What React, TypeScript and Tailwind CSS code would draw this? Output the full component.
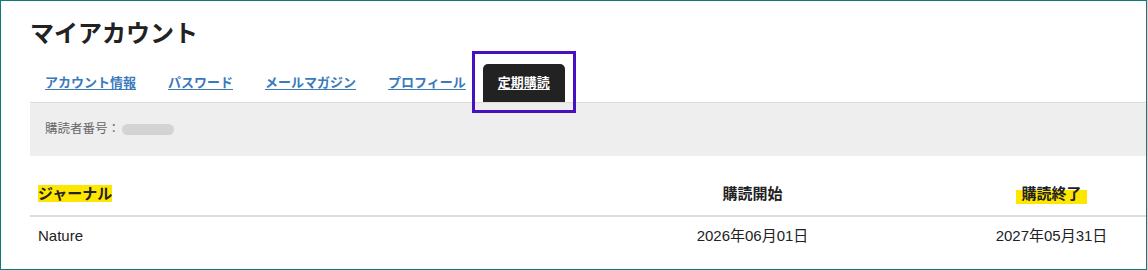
import * as React from "react";

const tabs = ["アカウント情報", "パスワード", "メールマガジン", "プロフィール"];

const App = () => {
  return (
    <div
      className="w-[1147px] h-[270px] border border-[#0d7c77] overflow-hidden bg-white text-[#222]"
      style={{ fontFamily: '"Liberation Sans", "Noto Sans CJK JP", sans-serif' }}
    >
      <div className="pl-[29px] w-[1200px]">
        <h1 className="pt-[17px] text-[24px] leading-8 font-bold">マイアカウント</h1>

        <div className="mt-[14px] flex items-end gap-[2px] h-[38px]">
          {tabs.map((t) => (
            <a
              key={t}
              href="#"
              className="px-[15px] h-full flex items-center text-[13px] font-bold text-[#3b79bd] underline underline-offset-2"
            >
              {t}
            </a>
          ))}
          <div className="relative h-full">
            <div className="h-full px-[15px] flex items-center bg-[#222] rounded-t-[5px] text-[13px] font-bold text-white underline underline-offset-2">
              定期購読
            </div>
            <div className="absolute -left-[11px] -right-[11px] -top-[13px] -bottom-[11px] border-[3px] border-[#4611c2] z-10" />
          </div>
        </div>

        <div className="h-[54px] bg-[#eeeeee] border-t border-[#dcdcdc] flex items-center pl-[15px] text-[12.5px] text-[#666]">
          <span>購読者番号：</span>
          <span className="inline-block ml-[2px] w-[52px] h-[11px] rounded-full bg-[#d3d3d3]" />
        </div>

        <div className="grid grid-cols-[1fr_299px_299px] text-[15px] font-bold leading-[18px] border-b-2 border-[#dddddd] pt-[29px] pb-[12px]">
          <div className="pl-[8px]">
            <span className="bg-[#ffe600]">ジャーナル</span>
          </div>
          <div className="text-center">購読開始</div>
          <div className="text-center">
            <span className="relative inline-block px-[5px]">
              <span className="absolute left-0 right-0 top-[5px] h-[14px] bg-[#ffe600]" />
              <span className="relative">購読終了</span>
            </span>
          </div>
        </div>

        <div className="grid grid-cols-[1fr_299px_299px] text-[15px] leading-[18px] pt-[10px]">
          <div className="pl-[8px]">Nature</div>
          <div className="text-center">2026年06月01日</div>
          <div className="text-center">2027年05月31日</div>
        </div>
      </div>
    </div>
  );
};

export default App;
